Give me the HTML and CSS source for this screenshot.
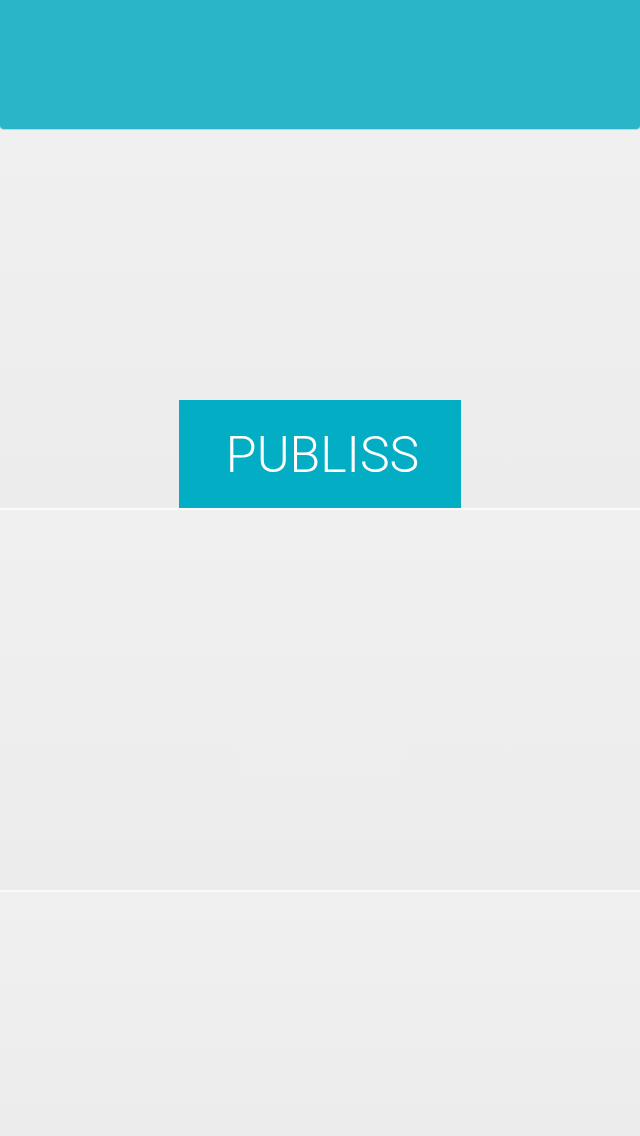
FILE: index.html
```html
<!DOCTYPE html>
<html>
<head>
<meta charset="utf-8">
<link rel="stylesheet" href="styles.css">
</head>
<body>
<div class="page">
  <header class="topbar"></header>
  <section class="panel panel-first">
    <div class="brand">PUBLISS</div>
  </section>
  <section class="panel panel-second">
    <div class="ghost"></div>
  </section>
  <section class="panel panel-third"></section>
</div>
</body>
</html>
```
FILE: styles.css
```css
html, body {
  margin: 0;
  padding: 0;
  background: #efefef;
}
.page {
  width: 640px;
  height: 1136px;
  display: flex;
  flex-direction: column;
  overflow: hidden;
  font-family: Roboto, "Liberation Sans", sans-serif;
}
.topbar {
  height: 129px;
  flex: 0 0 129px;
  background: #2ab6c8;
  border-radius: 0 0 4px 4px;
  box-shadow: 0 1px 1px rgba(0,0,0,0.15);
  position: relative;
  z-index: 1;
}
.panel {
  background: linear-gradient(#f0f0f0, #ececec);
  display: flex;
  flex-direction: column;
  align-items: center;
}
.panel-first {
  height: 379px;
  flex: 0 0 379px;
  justify-content: flex-end;
  border-bottom: 2px solid #fafafa;
}
.panel-second {
  height: 380px;
  flex: 0 0 380px;
  border-bottom: 2px solid #fafafa;
  justify-content: flex-start;
}
.panel-third {
  flex: 1 1 auto;
}
.brand {
  width: 282px;
  height: 108px;
  background: #03adc3;
  color: #ffffff;
  font-weight: 300;
  font-size: 50px;
  letter-spacing: 0;
  display: flex;
  align-items: center;
  justify-content: center;
  line-height: 1;
  padding-top: 2px;
  padding-left: 5px;
  box-sizing: border-box;
}
.ghost {
  margin-top: 211px;
  width: 163px;
  height: 55px;
  background: #eeeeee;
}
```
